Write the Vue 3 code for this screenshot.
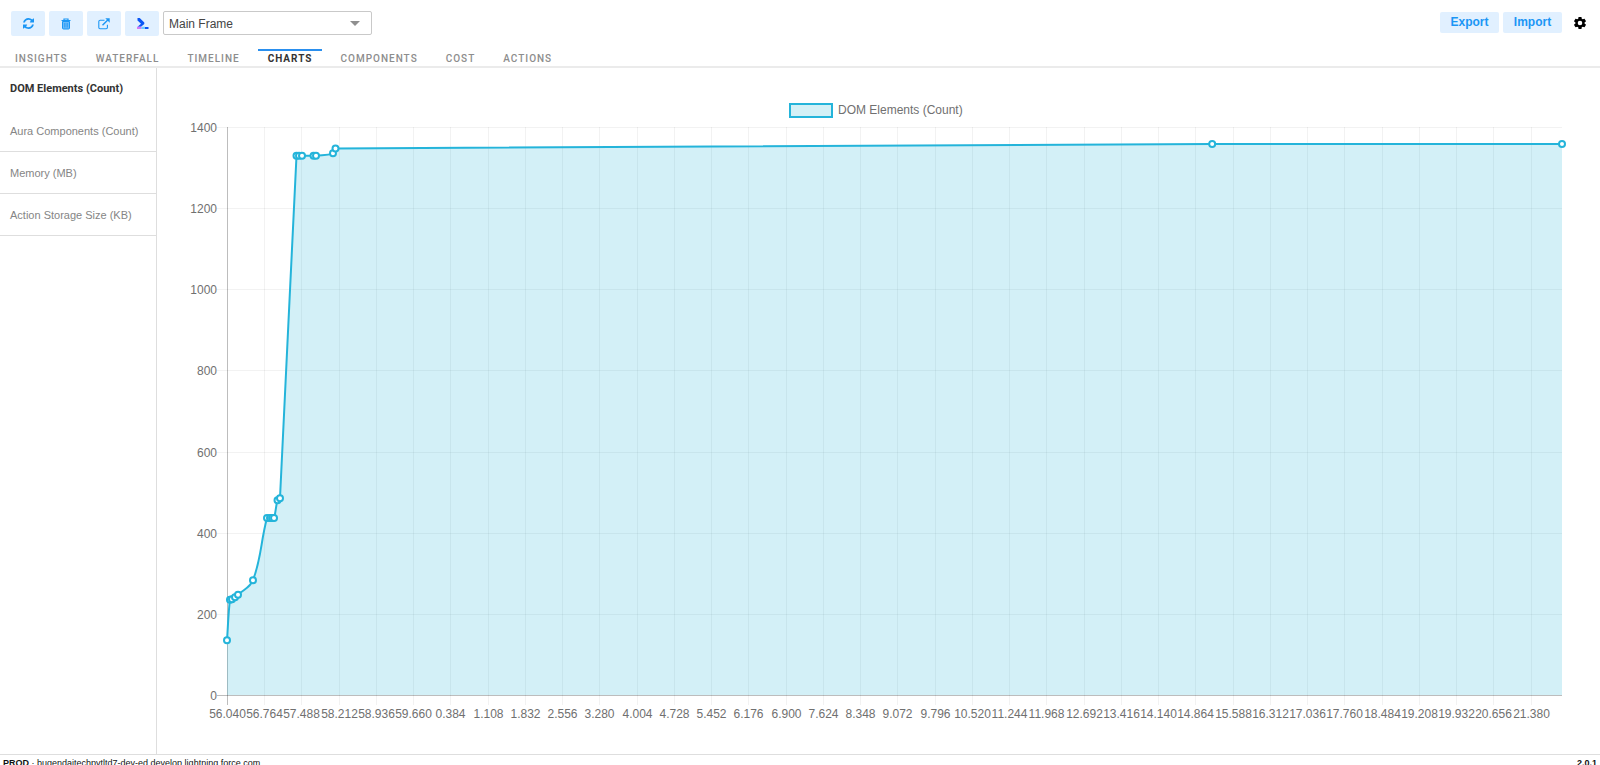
<script setup>
import { computed, onBeforeUnmount, onMounted, ref } from 'vue'

const tabs = ['Insights', 'Waterfall', 'Timeline', 'Charts', 'Components', 'Cost', 'Actions']
const activeTab = ref('Charts')

const metrics = ['DOM Elements (Count)', 'Aura Components (Count)', 'Memory (MB)', 'Action Storage Size (KB)']
const activeMetric = ref(metrics[0])

// Samples: seconds since the first sample, DOM element count
const samples = [
  [0, 135], [0.058, 235], [0.097, 236], [0.156, 241], [0.214, 247], [0.505, 283],
  [0.778, 436], [0.836, 436], [0.875, 436], [0.914, 436], [0.982, 480], [1.03, 485],
  [1.351, 1329], [1.4, 1329], [1.458, 1329], [1.682, 1329], [1.73, 1329],
  [2.06, 1335], [2.109, 1347], [19.15, 1358], [25.95, 1358]
]
const startSecond = 56.04
const duration = 25.95
const tickStep = 0.724
const maxCount = 1400
const margin = { left: 70, right: 38, top: 59, bottom: 59 }

const host = ref(null)
const size = ref({ w: 1443, h: 686 })
let observer
onMounted(() => {
  const measure = () => {
    size.value = { w: host.value.clientWidth, h: host.value.clientHeight }
  }
  measure()
  observer = new ResizeObserver(measure)
  observer.observe(host.value)
})
onBeforeUnmount(() => observer?.disconnect())

const box = computed(() => ({
  x0: margin.left,
  x1: size.value.w - margin.right,
  y0: margin.top,
  y1: size.value.h - margin.bottom
}))
const sx = (t) => box.value.x0 + (t / duration) * (box.value.x1 - box.value.x0)
const sy = (v) => box.value.y1 - (v / maxCount) * (box.value.y1 - box.value.y0)

const xTicks = computed(() =>
  Array.from({ length: 36 }, (_, i) => ({
    x: Math.round(sx(i * tickStep)) + 0.5,
    label: ((startSecond + i * tickStep) % 60).toFixed(3)
  }))
)
const yTicks = computed(() =>
  Array.from({ length: 8 }, (_, i) => ({ y: Math.round(sy(i * 200)) + 0.5, label: i * 200 }))
)
const points = computed(() => samples.map(([t, v]) => ({ x: sx(t), y: sy(v) })))

const linePath = computed(() => {
  const p = points.value
  const tension = 0.4
  const handles = p.map((cur, i) => {
    const prev = p[i - 1] ?? cur
    const next = p[i + 1] ?? cur
    const a = Math.hypot(cur.x - prev.x, cur.y - prev.y)
    const b = Math.hypot(next.x - cur.x, next.y - cur.y)
    const fa = (tension * a) / (a + b)
    const fb = (tension * b) / (a + b)
    return {
      inX: cur.x - fa * (next.x - prev.x),
      inY: cur.y - fa * (next.y - prev.y),
      outX: cur.x + fb * (next.x - prev.x),
      outY: cur.y + fb * (next.y - prev.y)
    }
  })
  let d = `M${p[0].x},${p[0].y}`
  for (let i = 1; i < p.length; i++) {
    const o = handles[i - 1]
    const n = handles[i]
    // Sparse samples are joined by straight lines
    if (samples[i][0] - samples[i - 1][0] > 5) d += ` L${p[i].x},${p[i].y}`
    else d += ` C${o.outX},${o.outY} ${n.inX},${n.inY} ${p[i].x},${p[i].y}`
  }
  return d
})
const areaPath = computed(() => `${linePath.value} L${box.value.x1},${box.value.y1} L${box.value.x0},${box.value.y1} Z`)
const centre = computed(() => Math.round((box.value.x0 + box.value.x1) / 2))
</script>

<template>
  <div class="page">
    <header class="toolbar">
      <button class="tool" type="button" aria-label="Refresh">
        <svg width="11" height="11" viewBox="0 0 1536 1536" fill="currentColor">
          <path d="M1511 928q0 5-1 7-64 268-268 434.500T764 1536q-146 0-282.500-55T238 1324l-129 129q-19 19-45 19t-45-19-19-45V960q0-26 19-45t45-19h448q26 0 45 19t19 45-19 45l-137 137q71 66 161 102t187 36q134 0 250-65t186-179q11-17 53-117 8-23 30-23h192q13 0 22.500 9.500t9.500 22.500zm25-800v448q0 26-19 45t-45 19h-448q-26 0-45-19t-19-45 19-45l138-138Q969 256 768 256q-134 0-250 65T332 500q-11 17-53 117-8 23-30 23H50q-13 0-22.500-9.500T18 608v-7q65-268 270-434.500T768 0q146 0 284 55.500T1297 212l130-129q19-19 45-19t45 19 19 45z" />
        </svg>
      </button>
      <button class="tool" type="button" aria-label="Clear">
        <svg width="10" height="12" viewBox="0 0 10 12">
          <path d="M3 2V1h4v1M.5 2.500h9" fill="none" stroke="currentColor" stroke-width="1.200" />
          <path d="M1.500 3.500h7V10q0 1-1 1h-5q-1 0-1-1z" fill="currentColor" fill-opacity=".6" stroke="currentColor" />
          <path d="M3.500 5v4.500M5 5v4.500M6.500 5v4.500" stroke="currentColor" stroke-width=".6" />
        </svg>
      </button>
      <button class="tool" type="button" aria-label="Open in new window">
        <svg width="12" height="12" viewBox="0 0 12 12" fill="none" stroke="currentColor" stroke-width="1.100">
          <path d="M6.500 2.200H2.200Q.8 2.200.8 3.400v6.200q0 1.200 1.200 1.200h6.200q1.200 0 1.200-1.200V6.800" />
          <path d="M4.500 7.300 10 1.800" stroke-width="1.500" />
          <path d="M7.300.3h4.400v4.400z" fill="currentColor" stroke="none" />
        </svg>
      </button>
      <button class="tool" type="button" aria-label="Console">
        <svg width="13" height="12" viewBox="0 0 13 12">
          <path d="M1.500 0h2.200l4.600 4.600v1.500L5 8.800H1.500L5 5.700 1.500 2.500z" fill="#0a56f5" />
          <path d="M1 8.800h5L5 11H1z" fill="#d57af5" />
          <path d="M6 8.800h3V11H5z" fill="#6ccbff" />
          <path d="M9 9h3.500v2H9z" fill="#0a56f5" />
        </svg>
      </button>
      <div class="picker">
        <select aria-label="Frame">
          <option>Main Frame</option>
        </select>
        <svg class="arrow" width="10" height="5" viewBox="0 0 10 5"><path d="M0 0h10L5 5z" fill="#8f8f8f" /></svg>
      </div>
      <div class="actions">
        <button class="action" type="button">Export</button>
        <button class="action" type="button">Import</button>
        <button class="gear" type="button" aria-label="Settings">
          <svg width="14" height="14" viewBox="1 1 22 22">
            <path d="M19.140 12.940c.04-.3.06-.61.06-.94 0-.32-.02-.64-.07-.94l2.030-1.580c.18-.14.23-.41.12-.61l-1.920-3.320c-.12-.22-.37-.29-.59-.22l-2.390.96c-.5-.38-1.030-.7-1.620-.94l-.36-2.540c-.04-.24-.24-.41-.48-.41h-3.840c-.24 0-.43.17-.47.41l-.36 2.540c-.59.24-1.130.57-1.620.94l-2.390-.96c-.22-.08-.47 0-.59.22L2.740 8.870c-.12.21-.08.47.12.61l2.030 1.580c-.05.3-.09.63-.09.94s.02.64.07.94l-2.030 1.580c-.18.14-.23.41-.12.61l1.920 3.320c.12.22.37.29.59.22l2.390-.96c.5.38 1.030.7 1.620.94l.36 2.540c.05.24.24.41.48.41h3.840c.24 0 .44-.17.47-.41l.36-2.540c.59-.24 1.130-.56 1.620-.94l2.390.96c.22.08.47 0 .59-.22l1.920-3.320c.12-.22.07-.47-.12-.61zM12 15.600a3.600 3.600 0 1 1 0-7.200 3.600 3.600 0 0 1 0 7.200z" />
          </svg>
        </button>
      </div>
    </header>

    <nav class="tabs">
      <button
        v-for="tab in tabs"
        :key="tab"
        type="button"
        class="tab"
        :class="{ active: tab === activeTab }"
        @click="activeTab = tab"
      >{{ tab }}</button>
    </nav>

    <div class="body">
      <aside class="sidebar">
        <button
          v-for="metric in metrics"
          :key="metric"
          type="button"
          class="metric"
          :class="{ active: metric === activeMetric }"
          @click="activeMetric = metric"
        >{{ metric }}</button>
      </aside>

      <main ref="host" class="chart">
        <svg :width="size.w" :height="size.h" role="img" aria-label="DOM Elements (Count) over time">
          <g class="grid">
            <line v-for="t in xTicks" :key="t.x" :x1="t.x" :x2="t.x" :y1="box.y0" :y2="box.y1 + 10" />
            <line v-for="t in yTicks" :key="t.y" :x1="box.x0 - 10" :x2="box.x1" :y1="t.y" :y2="t.y" />
          </g>
          <g class="axis">
            <line :x1="box.x0 + 0.5" :x2="box.x0 + 0.5" :y1="box.y0" :y2="box.y1 + 10" />
            <line :x1="box.x0 - 10" :x2="box.x1" :y1="box.y1 + 0.5" :y2="box.y1 + 0.5" />
          </g>
          <path class="area" :d="areaPath" />
          <path class="line" :d="linePath" />
          <circle v-for="(p, i) in points" :key="i" class="dot" :cx="p.x" :cy="p.y" r="3" />
          <g class="labels">
            <text v-for="t in xTicks" :key="t.label" :x="t.x" :y="box.y1 + 23" text-anchor="middle">{{ t.label }}</text>
            <text v-for="t in yTicks" :key="t.label" :x="box.x0 - 10" :y="t.y + 4" text-anchor="end">{{ t.label }}</text>
          </g>
          <rect class="swatch" :x="centre - 105" y="36" width="42" height="13" />
          <text class="legend" :x="centre - 57" y="46">{{ metrics[0] }}</text>
        </svg>
      </main>
    </div>

    <footer class="status">
      <span><b>PROD</b> · bugendaitechpvtltd7-dev-ed.develop.lightning.force.com</span>
      <b>2.0.1</b>
    </footer>
  </div>
</template>

<style>
body {
  margin: 0;
  overflow: hidden;
}
</style>

<style scoped>
.page {
  display: flex;
  flex-direction: column;
  height: 100vh;
  overflow: hidden;
  background: #fff;
  color: #333;
  font-family: "Liberation Sans", Arial, sans-serif;
  font-size: 11px;
}
button {
  margin: 0;
  padding: 0;
  border: 0;
  background: none;
  font: inherit;
  cursor: pointer;
}
.toolbar {
  display: flex;
  flex: none;
  gap: 4px;
  height: 38px;
  padding: 11px 10px 0 11px;
  box-sizing: border-box;
}
.tool {
  display: flex;
  align-items: center;
  justify-content: center;
  width: 34px;
  height: 25px;
  border-radius: 2px;
  background: #e1f0ff;
  color: #1b96f5;
}
.picker {
  position: relative;
  width: 209px;
  height: 24px;
}
.picker select {
  appearance: none;
  width: 100%;
  height: 100%;
  padding: 2px 5px 0;
  border: 1px solid #c9c9c9;
  border-radius: 2px;
  background: #fff;
  color: #444;
  font-family: "Liberation Sans", Arial, sans-serif;
  font-size: 12px;
}
.arrow {
  position: absolute;
  top: 10px;
  right: 12px;
  pointer-events: none;
}
.actions {
  display: flex;
  gap: 4px;
  margin-left: auto;
}
.action {
  width: 59px;
  height: 21px;
  margin-top: 1px;
  padding-bottom: 2px;
  border-radius: 2px;
  background: #e1f0ff;
  color: #1b96f5;
  font-size: 12px;
  font-weight: 700;
}
.gear {
  display: flex;
  align-items: center;
  justify-content: center;
  width: 20px;
  height: 24px;
  margin-left: 4px;
}
.tabs {
  display: flex;
  flex: none;
  gap: 8px;
  height: 30px;
  padding: 0 5px;
  box-sizing: border-box;
  align-items: flex-end;
  border-bottom: 2px solid #ebebeb;
}
.tab {
  height: 17px;
  padding: 0 10px;
  border-top: 2px solid transparent;
  color: #8d8d8d;
  font-family: Roboto, Arial, sans-serif;
  font-size: 10px;
  font-weight: 500;
  letter-spacing: 1px;
  line-height: 15px;
  text-transform: uppercase;
}
.tab.active {
  border-top-color: #2a8fee;
  color: #333;
  font-weight: 700;
}
.body {
  display: flex;
  flex: 1;
  min-height: 0;
}
.sidebar {
  display: flex;
  flex-direction: column;
  flex: none;
  width: 156px;
  border-right: 1px solid #dedede;
}
.metric {
  height: 42px;
  padding: 0 10px;
  border-bottom: 1px solid #dedede;
  color: #858585;
  text-align: left;
}
.metric.active {
  border-bottom-color: transparent;
  color: #333;
  font-family: Roboto, Arial, sans-serif;
  font-weight: 700;
}
.chart {
  flex: 1;
  min-width: 0;
  overflow: hidden;
}
.chart svg {
  display: block;
}
.grid line {
  stroke: rgba(0, 0, 0, 0.05);
}
.axis line {
  stroke: rgba(0, 0, 0, 0.22);
}
.area {
  fill: rgba(34, 178, 213, 0.2);
}
.line {
  fill: none;
  stroke: #24b4da;
  stroke-width: 2;
}
.dot {
  fill: #fff;
  stroke: #24b4da;
  stroke-width: 2;
}
.labels,
.legend {
  fill: #707070;
  font-size: 12px;
}
.swatch {
  fill: #d3f0f6;
  stroke: #24b4da;
  stroke-width: 2;
}
.status {
  display: flex;
  flex: none;
  justify-content: space-between;
  height: 10px;
  padding: 0 3px;
  border-top: 1px solid #dedede;
  color: #111;
  font-size: 9px;
  line-height: 17px;
}
</style>
